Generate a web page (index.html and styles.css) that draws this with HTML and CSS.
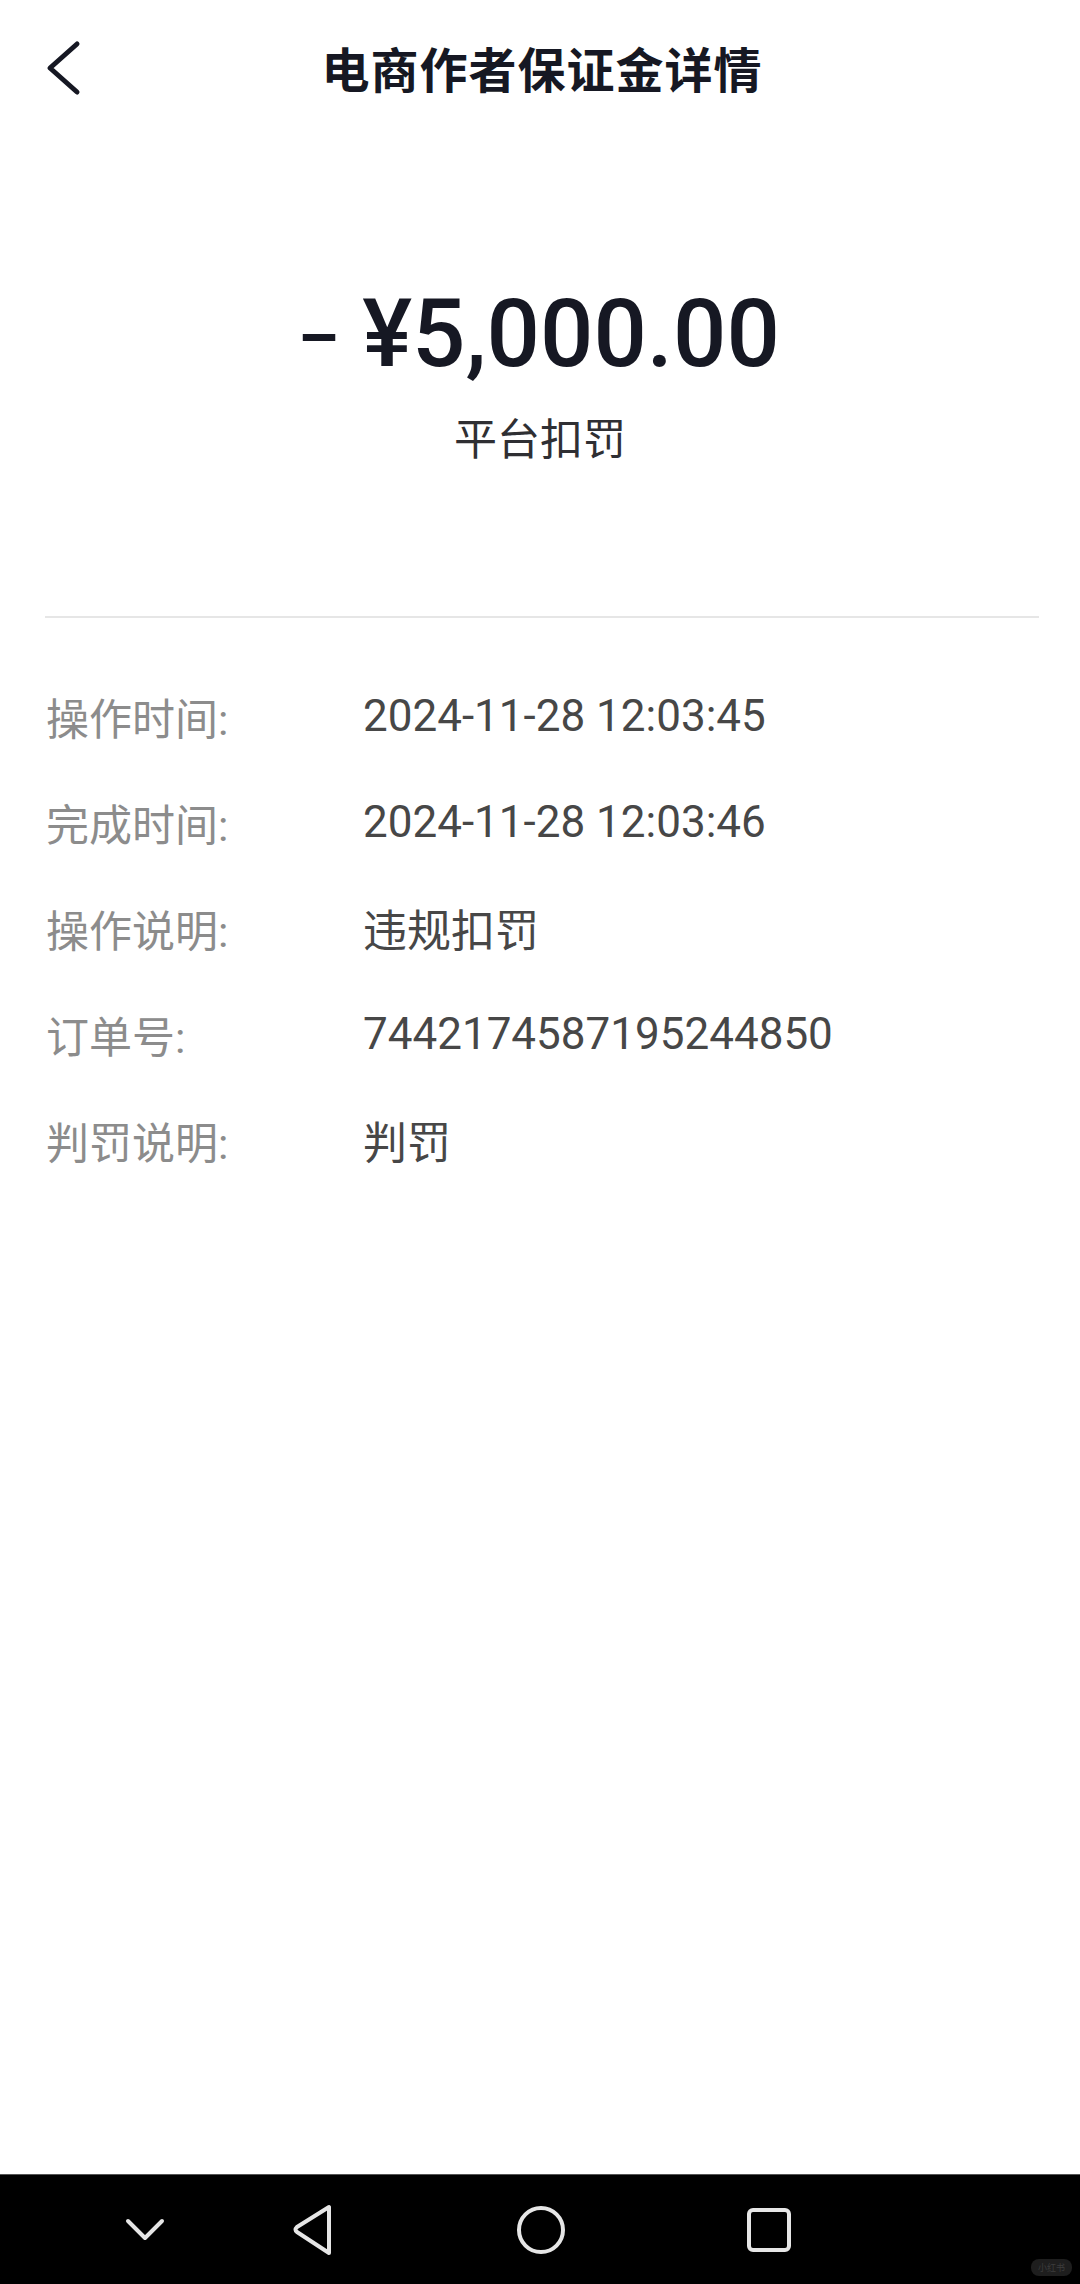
FILE: index.html
```html
<!DOCTYPE html>
<html lang="zh-CN">
<head>
  <meta charset="UTF-8" />
  <title>电商作者保证金详情</title>
  <link rel="stylesheet" href="styles.css">
</head>
<body>

  <div class="pagina">
    <!-- Cabecera -->
    <div class="cabecera">
      <svg class="volver" width="44" height="60" viewBox="0 0 44 60">
        <path d="M37 4 L10 28 L37 52" fill="none" stroke="#161823" stroke-width="5" stroke-linecap="round" stroke-linejoin="round" />
      </svg>
      <h1>电商作者保证金详情</h1>
    </div>

    <!-- Importe -->
    <div class="importe">
      <div class="cantidad"><span class="signo">-</span>¥5,000.00</div>
      <div class="motivo">平台扣罚</div>
    </div>

    <div class="separador"></div>

    <!-- Detalles -->
    <div class="detalles">
      <div class="fila">
        <span class="etiqueta">操作时间:</span>
        <span class="valor">2024-11-28 12:03:45</span>
      </div>
      <div class="fila">
        <span class="etiqueta">完成时间:</span>
        <span class="valor">2024-11-28 12:03:46</span>
      </div>
      <div class="fila">
        <span class="etiqueta">操作说明:</span>
        <span class="valor">违规扣罚</span>
      </div>
      <div class="fila">
        <span class="etiqueta">订单号:</span>
        <span class="valor">7442174587195244850</span>
      </div>
      <div class="fila">
        <span class="etiqueta">判罚说明:</span>
        <span class="valor">判罚</span>
      </div>
    </div>
  </div>

  <!-- Barra de navegación -->
  <div class="navegacion">
    <svg width="40" height="24" viewBox="0 0 40 24">
      <path d="M3 3 L20 20 L37 3" fill="none" stroke="#e6e6e6" stroke-width="4" stroke-linecap="round" stroke-linejoin="round" />
    </svg>
    <svg width="44" height="52" viewBox="0 0 44 52">
      <path d="M38 3 L38 49 L6 28 Q3 26 6 23 Z" fill="none" stroke="#e6e6e6" stroke-width="4" stroke-linejoin="round" />
    </svg>
    <svg width="52" height="52" viewBox="0 0 52 52">
      <circle cx="26" cy="26" r="22" fill="none" stroke="#e6e6e6" stroke-width="4" />
    </svg>
    <svg width="46" height="46" viewBox="0 0 46 46">
      <rect x="3" y="3" width="40" height="40" rx="4" fill="none" stroke="#e6e6e6" stroke-width="4" />
    </svg>
    <span class="marca">小红书</span>
  </div>

</body>
</html>
```

FILE: styles.css
```css
body {
  font-family: 'Roboto', 'Noto Sans CJK SC', sans-serif;
  background-color: #ffffff;
  margin: 0;
  min-height: 2284px;
  display: flex;
  flex-direction: column;
}

.pagina {
  flex: 1;
}

.cabecera {
  height: 134px;
  display: flex;
  align-items: center;
  justify-content: center;
  position: relative;
}

.volver {
  position: absolute;
  left: 40px;
  top: 40px;
}

.cabecera h1 {
  margin: 0;
  font-size: 48px;
  font-weight: bold;
  color: #161823;
  letter-spacing: 1px;
  padding-left: 4px;
}

.importe {
  padding-top: 140px;
  display: flex;
  flex-direction: column;
  align-items: center;
}

.cantidad {
  font-size: 94px;
  font-weight: 500;
  color: #161823;
  line-height: 120px;
  padding-left: 6px;
}

.signo {
  display: inline-block;
  margin-right: 30px;
  font-weight: 400;
  transform: scaleX(1.45);
}

.motivo {
  font-size: 43px;
  color: #2f2f33;
  margin-top: 18px;
  line-height: 56px;
}

.separador {
  height: 2px;
  background-color: #e6e6e6;
  margin: 148px 41px 0 45px;
}

.detalles {
  padding: 45px 0 0 46px;
}

.fila {
  display: flex;
  align-items: center;
  height: 106px;
}

.etiqueta {
  width: 317px;
  font-size: 43px;
  color: #8c8c8c;
}

.valor {
  font-size: 44px;
  color: #474747;
}

.navegacion {
  height: 109px;
  background-color: #000000;
  border-top: 1px solid #555;
  display: flex;
  align-items: center;
  position: relative;
}

.navegacion svg:nth-child(1) { margin-left: 125px; }
.navegacion svg:nth-child(2) { margin-left: 126px; }
.navegacion svg:nth-child(3) { margin-left: 180px; }
.navegacion svg:nth-child(4) { margin-left: 179px; }

.marca {
  position: absolute;
  right: 8px;
  bottom: 8px;
  background-color: #1e1e1e;
  color: #3c3c3c;
  font-size: 9px;
  padding: 2px 7px;
  border-radius: 8px;
}
```
